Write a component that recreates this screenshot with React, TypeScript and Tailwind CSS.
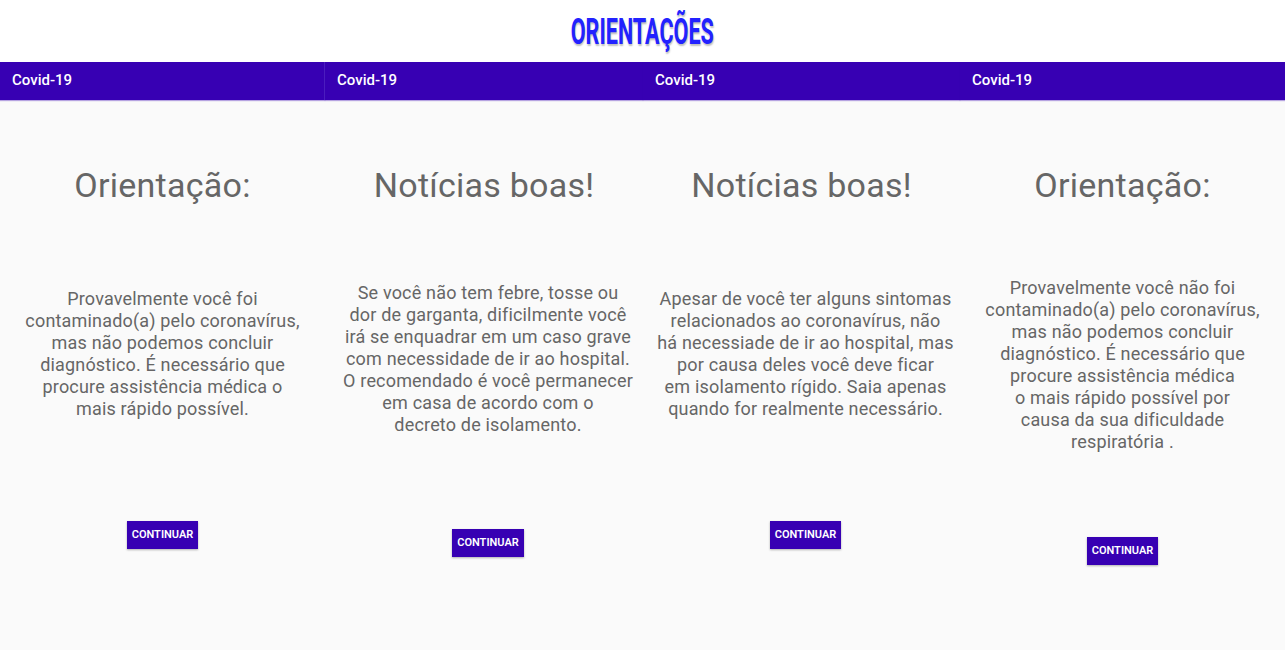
import React from 'react';

type Card = {
  title: string;
  lines: string[];
  divider?: boolean;
  shifted?: boolean;
};

const cards: Card[] = [
  {
    title: 'Orientação:',
    divider: true,
    lines: [
      'Provavelmente você foi',
      'contaminado(a) pelo coronavírus,',
      'mas não podemos concluir',
      'diagnóstico. É necessário que',
      'procure assistência médica o',
      'mais rápido possível.',
    ],
  },
  {
    title: 'Notícias boas!',
    shifted: true,
    lines: [
      'Se você não tem febre, tosse ou',
      'dor de garganta, dificilmente você',
      'irá se enquadrar em um caso grave',
      'com necessidade de ir ao hospital.',
      'O recomendado é você permanecer',
      'em casa de acordo com o',
      'decreto de isolamento.',
    ],
  },
  {
    title: 'Notícias boas!',
    shifted: true,
    lines: [
      'Apesar de você ter alguns sintomas',
      'relacionados ao coronavírus, não',
      'há necessiade de ir ao hospital, mas',
      'por causa deles você deve ficar',
      'em isolamento rígido. Saia apenas',
      'quando for realmente necessário.',
    ],
  },
  {
    title: 'Orientação:',
    lines: [
      'Provavelmente você não foi',
      'contaminado(a) pelo coronavírus,',
      'mas não podemos concluir',
      'diagnóstico. É necessário que',
      'procure assistência médica',
      'o mais rápido possível por',
      'causa da sua dificuldade',
      'respiratória .',
    ],
  },
];

const ResultCard = ({ card }: { card: Card }) => {
  return (
    <div className="flex flex-col h-full">
      <div
        className={`h-[38px] flex items-center px-3 pb-[1px] bg-[#3700b3] text-white text-[15px] font-medium shadow-[0_1px_1px_rgba(55,0,179,0.35)] ${
          card.divider ? 'border-r border-[#4d1fc0]' : ''
        }`}
      >
        Covid-19
      </div>

      <div className="h-[120px] pt-[64px]">
        <h2 className="text-center text-[34px] tracking-[0.25px] leading-[43px] text-[#666666]">{card.title}</h2>
      </div>

      <div className={`flex-1 flex flex-col items-center ${card.shifted ? 'pl-[8px]' : ''}`}>
        <div className="grow-[2]" />
        <p className="text-center text-[18px] tracking-[0.18px] leading-[22px] text-[#666666] whitespace-nowrap">
          {card.lines.map((line, i) => (
            <React.Fragment key={i}>
              {line}
              {i < card.lines.length - 1 && <br />}
            </React.Fragment>
          ))}
        </p>
        <div className="grow-[3]" />
        <button className="h-[28px] px-[5px] bg-[#3700b3] text-white text-[11px] font-semibold uppercase shadow-[0_1px_2px_rgba(0,0,0,0.3)]">
          Continuar
        </button>
        <div className="grow-[3]" />
      </div>
    </div>
  );
};

const App = () => {
  return (
    <div className="w-[1285px] h-[650px] flex flex-col bg-[#fafafa] overflow-hidden font-['Roboto',sans-serif]">
      <div className="h-[62px] bg-white flex justify-center items-center">
        <h1 className="text-[36px] font-bold leading-none text-[#2222ff] scale-x-[0.6] pt-[2px] [text-shadow:1px_2px_2px_rgba(0,0,0,0.25)]">
          ORIENTAÇÕES
        </h1>
      </div>

      <div className="flex-1 grid grid-cols-[325px_318px_317px_325px]">
        {cards.map((card, index) => (
          <ResultCard key={index} card={card} />
        ))}
      </div>
    </div>
  );
};

export default App;
